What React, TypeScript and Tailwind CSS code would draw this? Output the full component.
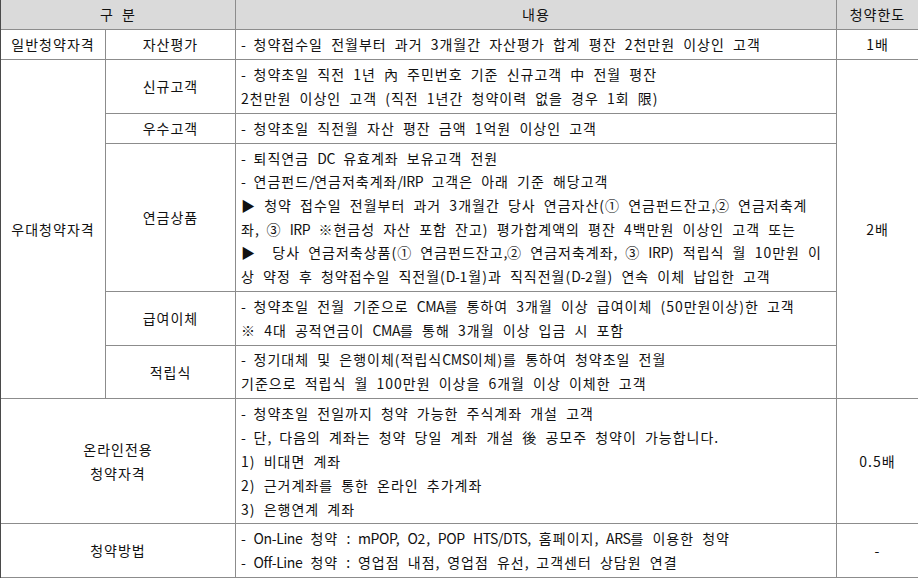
import React from "react";

type Row = {
  label: string;
  lines: string[];
  height: string;
};

const preferred: Row[] = [
  {
    label: "신규고객",
    lines: [
      "- 청약초일 직전 1년 內 주민번호 기준 신규고객 中 전월 평잔",
      "2천만원 이상인 고객 (직전 1년간 청약이력 없을 경우 1회 限)",
    ],
    height: "h-[54px]",
  },
  {
    label: "우수고객",
    lines: ["- 청약초일 직전월 자산 평잔 금액 1억원 이상인 고객"],
    height: "h-[30px]",
  },
  {
    label: "연금상품",
    lines: [
      "- 퇴직연금 DC 유효계좌 보유고객 전원",
      "- 연금펀드/연금저축계좌/IRP 고객은 아래 기준 해당고객",
      "▶ 청약 접수일 전월부터 과거 3개월간 당사 연금자산(① 연금펀드잔고,② 연금저축계",
      "좌, ③ IRP ※현금성 자산 포함 잔고) 평가합계액의 평잔 4백만원 이상인 고객 또는",
      "▶  당사 연금저축상품(① 연금펀드잔고,② 연금저축계좌, ③ IRP) 적립식 월 10만원 이",
      "상 약정 후 청약접수일 직전월(D-1월)과 직직전월(D-2월) 연속 이체 납입한 고객",
    ],
    height: "h-[148px]",
  },
  {
    label: "급여이체",
    lines: [
      "- 청약초일 전월 기준으로 CMA를 통하여 3개월 이상 급여이체 (50만원이상)한 고객",
      "※ 4대 공적연금이 CMA를 통해 3개월 이상 입금 시 포함",
    ],
    height: "h-[54px]",
  },
  {
    label: "적립식",
    lines: [
      "- 정기대체 및 은행이체(적립식CMS이체)를 통하여 청약초일 전월",
      "기준으로 적립식 월 100만원 이상을 6개월 이상 이체한 고객",
    ],
    height: "h-[53px]",
  },
];

const cell = "border-b border-r border-[#8c8c8c] align-middle";
const center = `${cell} text-center`;
const content = `${cell} pl-[5px] text-left`;

// latin letters in the original are set tighter than the hangul
function Tight({ text }: { text: string }) {
  const parts = text.split(/([A-Za-z/:.,\-]+)/);
  return (
    <>
      {parts.map((part, i) =>
        i % 2 === 1 ? (
          <span key={i} className="tracking-[-0.4px]">
            {part}
          </span>
        ) : (
          part
        ),
      )}
    </>
  );
}

function Lines({ lines, tall }: { lines: string[]; tall?: boolean }) {
  return (
    <>
      {lines.map((line, i) => (
        <div
          key={i}
          className={`whitespace-pre ${tall ? "leading-[24px]" : "leading-[23.6px]"}`}
        >
          <Tight text={line} />
        </div>
      ))}
    </>
  );
}

export default function App() {
  return (
    <div className="w-[918px] h-[578px] overflow-hidden bg-white">
      <table className="table-fixed border-separate border-spacing-0 border-l border-[#4a4a4a] w-[918px] text-[14px] tracking-[1px] [word-spacing:4px] text-[#111] font-['Noto_Sans_CJK_KR','Noto_Sans',sans-serif]">
        <colgroup>
          <col className="w-[105px]" />
          <col className="w-[130px]" />
          <col className="w-[601px]" />
          <col className="w-[81px]" />
        </colgroup>
        <thead>
          <tr className="h-[30px] bg-[#dadada]">
            <th colSpan={2} className={`${center} font-normal`}>
              구 분
            </th>
            <th className={`${center} font-normal`}>내용</th>
            <th className={`${center} font-normal border-r-0`}>청약한도</th>
          </tr>
        </thead>
        <tbody>
          <tr className="h-[30px]">
            <td className={center}>일반청약자격</td>
            <td className={center}>자산평가</td>
            <td className={content}>
              <Lines
                lines={[
                  "- 청약접수일 전월부터 과거 3개월간 자산평가 합계 평잔 2천만원 이상인 고객",
                ]}
              />
            </td>
            <td className={`${center} border-r-0`}>1배</td>
          </tr>

          {preferred.map((row, i) => (
            <tr key={row.label} className={row.height}>
              {i === 0 && (
                <td rowSpan={preferred.length} className={center}>
                  우대청약자격
                </td>
              )}
              <td className={center}>{row.label}</td>
              <td className={content}>
                <Lines lines={row.lines} />
              </td>
              {i === 0 && (
                <td
                  rowSpan={preferred.length}
                  className={`${center} border-r-0`}
                >
                  2배
                </td>
              )}
            </tr>
          ))}

          <tr className="h-[125px]">
            <td colSpan={2} className={`${center} leading-[24px]`}>
              온라인전용
              <br />
              청약자격
            </td>
            <td className={content}>
              <Lines
                tall
                lines={[
                  "- 청약초일 전일까지 청약 가능한 주식계좌 개설 고객",
                  "- 단, 다음의 계좌는 청약 당일 계좌 개설 後 공모주 청약이 가능합니다.",
                  "1) 비대면 계좌",
                  "2) 근거계좌를 통한 온라인 추가계좌",
                  "3) 은행연계 계좌",
                ]}
              />
            </td>
            <td className={`${center} border-r-0`}>0.5배</td>
          </tr>

          <tr className="h-[54px]">
            <td colSpan={2} className={center}>
              청약방법
            </td>
            <td className={content}>
              <Lines
                lines={[
                  "- On-Line 청약 : mPOP, O2, POP HTS/DTS, 홈페이지, ARS를 이용한 청약",
                  "- Off-Line 청약 : 영업점 내점, 영업점 유선, 고객센터 상담원 연결",
                ]}
              />
            </td>
            <td className={`${center} border-r-0`}>-</td>
          </tr>
        </tbody>
      </table>
    </div>
  );
}
